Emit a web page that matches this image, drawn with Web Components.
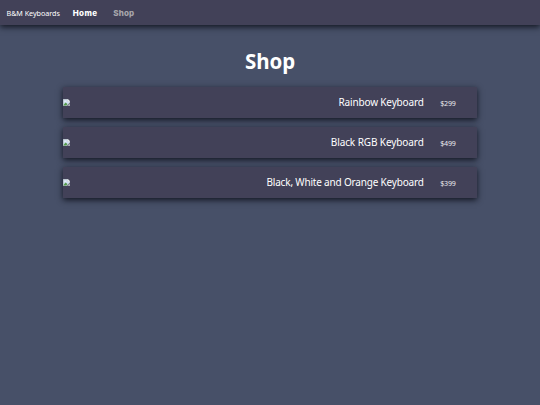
<!DOCTYPE html>
<html lang="en">
<head>
<meta charset="utf-8">
<title>B&amp;M Keyboards</title>
<style>
html, body { height: 100%; }
body { margin: 0; background: #475068; color: #fff; font-family: "Noto Sans", sans-serif; overflow: hidden; }
</style>
</head>
<body>
<shop-page></shop-page>
<script>
// Text set to an exact measure by distributing letter spacing.
class FitText extends HTMLElement {
  connectedCallback() {
    const root = this.attachShadow({ mode: 'open' });
    root.innerHTML = `<style>:host{display:block;white-space:nowrap;width:${this.getAttribute('measure')}px}span{display:inline-block}</style><span></span>`;
    const span = root.querySelector('span');
    span.textContent = this.getAttribute('text');
    const gap = Number(this.getAttribute('measure')) - span.getBoundingClientRect().width;
    span.style.letterSpacing = gap / span.textContent.length + 'px';
  }
}
customElements.define('fit-text', FitText);

class NavBar extends HTMLElement {
  constructor() {
    super();
    this.attachShadow({ mode: 'open' }).innerHTML = `
<style>
:host { display: flex; align-items: center; box-sizing: border-box; height: 25px; padding-left: 6.5px; background: #424158; box-shadow: 0 1.5px 6px rgba(8,10,20,.85); line-height: 12px; }
.brand { font-size: 7.2px; margin-right: 13px; }
.link { font: 800 8px/12px Inter, sans-serif; }
.home { margin-right: 16px; }
.shop { color: #a7a5ab; }
</style>
<fit-text class="brand" measure="53.3" text="B&amp;M Keyboards"></fit-text>
<fit-text class="link home" measure="24.5" text="Home"></fit-text>
<fit-text class="link shop" measure="21" text="Shop"></fit-text>`;
  }
}
customElements.define('nav-bar', NavBar);

class MissingPicture extends HTMLElement {
  constructor() {
    super();
    this.attachShadow({ mode: 'open' }).innerHTML = `
<style>:host { display: block; width: 7px; height: 7px; } svg { display: block; }</style>
<svg width="7" height="7" viewBox="0 0 14 14">
<path d="M0 0H10L14 4V14H0Z" fill="#a9b0b5"/>
<path d="M1 1H9V5H13V7L7 13H1Z" fill="#d0dff0"/>
<path d="M2 5Q4 2 7 5Z" fill="#fff"/>
<path d="M1 12L5 7L9 10L7 13H1Z" fill="#549b4c"/>
<path d="M9 0L14 5H9Z" fill="#f4f4f4"/>
<path d="M14 8V9L9 14H8Z" fill="#424158"/>
</svg>`;
  }
}
customElements.define('missing-picture', MissingPicture);

class ProductRow extends HTMLElement {
  connectedCallback() {
    this.attachShadow({ mode: 'open' }).innerHTML = `
<style>
:host { display: flex; align-items: center; height: 31.5px; padding-right: 21px; background: #424158; box-shadow: 0 1.5px 6px rgba(8,10,20,.85); }
missing-picture { margin-right: auto; }
.name { font-size: 10px; line-height: 16px; margin-right: 16.5px; }
.price { font-size: 7.1px; line-height: 12px; padding-top: 1.5px; color: #ececf0; }
</style>
<missing-picture></missing-picture>
<fit-text class="name" measure="${this.getAttribute('measure')}" text="${this.getAttribute('name')}"></fit-text>
<fit-text class="price" measure="15.5" text="${this.getAttribute('price')}"></fit-text>`;
  }
}
customElements.define('product-row', ProductRow);

class ShopPage extends HTMLElement {
  constructor() {
    super();
    this.attachShadow({ mode: 'open' }).innerHTML = `
<style>
:host { display: block; }
h1 { display: flex; justify-content: center; margin: 22px 0 11.5px; font-size: 20.5px; line-height: 28px; font-weight: 700; }
main { display: grid; gap: 8.5px; width: 413.5px; margin: 0 auto; }
</style>
<nav-bar></nav-bar>
<h1><fit-text measure="50" text="Shop"></fit-text></h1>
<main>
<product-row name="Rainbow Keyboard" measure="85.3" price="$299"></product-row>
<product-row name="Black RGB Keyboard" measure="93" price="$499"></product-row>
<product-row name="Black, White and Orange Keyboard" measure="157.3" price="$399"></product-row>
</main>`;
  }
}
customElements.define('shop-page', ShopPage);
</script>
</body>
</html>
